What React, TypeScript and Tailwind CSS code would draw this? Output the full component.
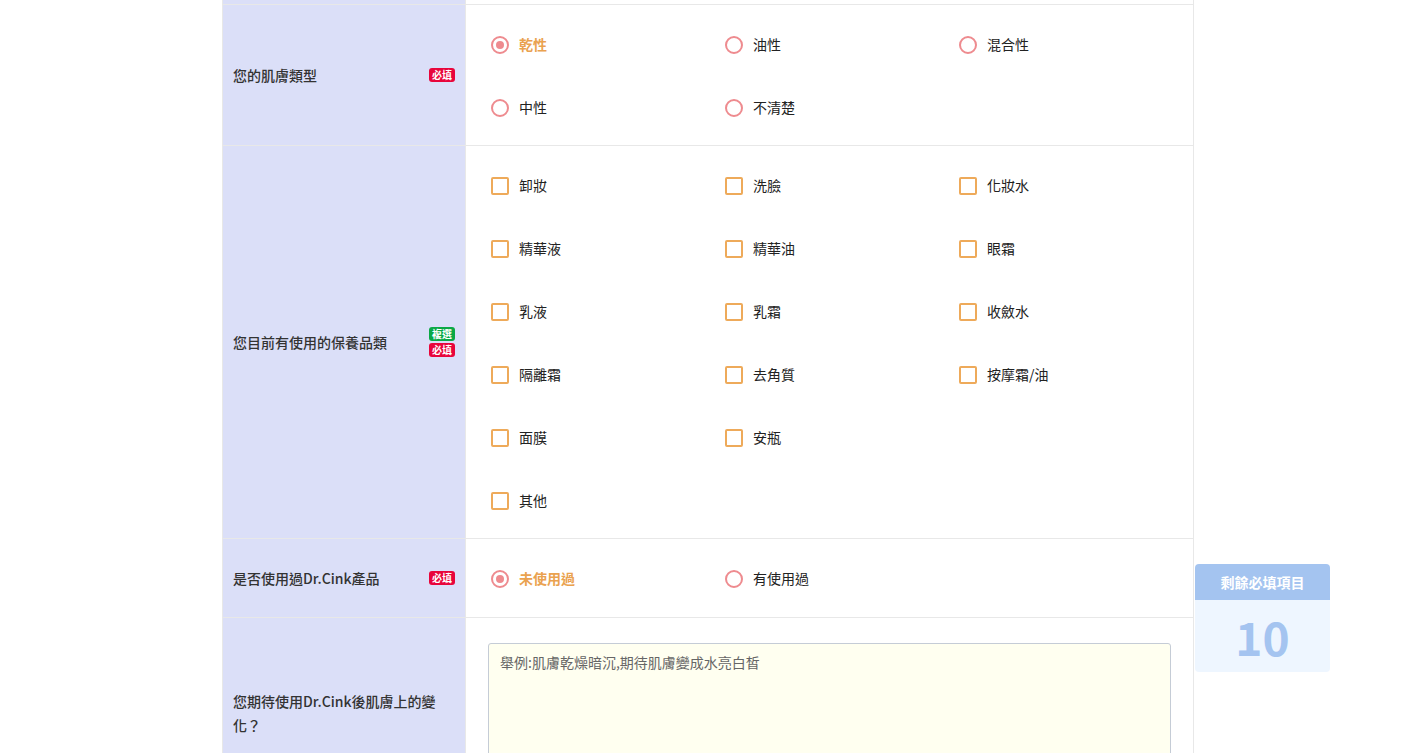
import React from 'react';

const font = { fontFamily: '"Noto Sans CJK TC", "Noto Sans", sans-serif' };

function Badge({ text, color }: { text: string; color: string }) {
  return (
    <span className={`${color} text-white text-[10px] font-bold leading-[14px] px-[3px] rounded-[3px]`}>{text}</span>
  );
}

function Radio({ label, checked }: { label: string; checked?: boolean }) {
  return (
    <div className="flex items-center h-[63px] gap-[10px] pl-[25px]">
      <span className="w-[18px] h-[18px] rounded-full border-2 border-[#ee8b8f] flex items-center justify-center">
        {checked && <span className="w-[8px] h-[8px] rounded-full bg-[#ee8b8f]" />}
      </span>
      <span className={checked ? 'text-[#eaa24f] font-bold text-[14px]' : 'text-[#222] text-[14px]'}>{label}</span>
    </div>
  );
}

function Check({ label }: { label: string }) {
  return (
    <div className="flex items-center h-[63px] gap-[10px] pl-[25px]">
      <span className="w-[18px] h-[18px] border-2 border-[#eeaa5a] rounded-[2px]" />
      <span className="text-[#222] text-[14px]">{label}</span>
    </div>
  );
}

function Row({ label, badges, children, className = '' }: any) {
  return (
    <div className={`flex border-b border-[#e8e8e8] ${className}`}>
      <div className="w-[243px] shrink-0 bg-[#dbdff8] flex items-center justify-between pl-[10px] pr-[10px] border-r border-[#e8e8e8]">
        <span className="text-[14px] text-[#333] font-medium leading-[22px]">{label}</span>
        <div className="flex flex-col gap-[2px]">{badges}</div>
      </div>
      <div className="flex-1 bg-white">{children}</div>
    </div>
  );
}

const req = <Badge text="必填" color="bg-[#e8053b]" />;

export default function App() {
  const products = ['卸妝', '洗臉', '化妝水', '精華液', '精華油', '眼霜', '乳液', '乳霜', '收斂水', '隔離霜', '去角質', '按摩霜/油', '面膜', '安瓶', '其他'];
  return (
    <div className="relative w-[1414px] h-[753px] overflow-hidden bg-white" style={font}>
      <div className="ml-[222px] w-[972px] border-l border-r border-[#e8e8e8]">
        <div className="flex h-[5px] border-b border-[#e8e8e8]">
          <div className="w-[243px] bg-[#dbdff8] border-r border-[#e8e8e8]" />
          <div className="flex-1" />
        </div>
        <Row label="您的肌膚類型" badges={req} className="h-[141px]">
          <div className="grid grid-cols-[234px_234px_234px] py-[8px]">
            <Radio label="乾性" checked />
            <Radio label="油性" />
            <Radio label="混合性" />
            <Radio label="中性" />
            <Radio label="不清楚" />
          </div>
        </Row>
        <Row label="您目前有使用的保養品類" badges={<><Badge text="複選" color="bg-[#0ba845]" />{req}</>} className="h-[393px]">
          <div className="grid grid-cols-[234px_234px_234px] py-[8px]">
            {products.slice(0, 14).map(p => <Check key={p} label={p} />)}
            <div />
            <Check label="其他" />
          </div>
        </Row>
        <Row label="是否使用過Dr.Cink產品" badges={req} className="h-[79px]">
          <div className="grid grid-cols-[234px_234px_234px] py-[8px]">
            <Radio label="未使用過" checked />
            <Radio label="有使用過" />
          </div>
        </Row>
        <div className="flex h-[200px]">
          <div className="w-[243px] shrink-0 bg-[#dbdff8] pl-[10px] pr-[20px] pt-[70px] border-r border-[#e8e8e8]">
            <span className="text-[14px] text-[#333] font-medium leading-[22px]">您期待使用Dr.Cink後肌膚上的變化？</span>
          </div>
          <div className="flex-1 pl-[22px] pr-[22px] pt-[25px]">
            <div className="h-[160px] bg-[#fffff0] border border-[#c5ccd6] rounded-[3px] px-[11px] py-[8px] text-[14px] text-[#666]">
              舉例:肌膚乾燥暗沉,期待肌膚變成水亮白皙
            </div>
          </div>
        </div>
      </div>
      <div className="absolute left-[1195px] top-[564px] w-[135px] rounded-[4px] overflow-hidden">
        <div className="h-[36px] bg-[#a4c4f0] text-white font-bold text-[14px] flex items-center justify-center">剩餘必填項目</div>
        <div className="h-[72px] bg-[#eef6ff] text-[#a4c4f0] font-bold text-[46px] flex items-center justify-center">10</div>
      </div>
    </div>
  );
}
